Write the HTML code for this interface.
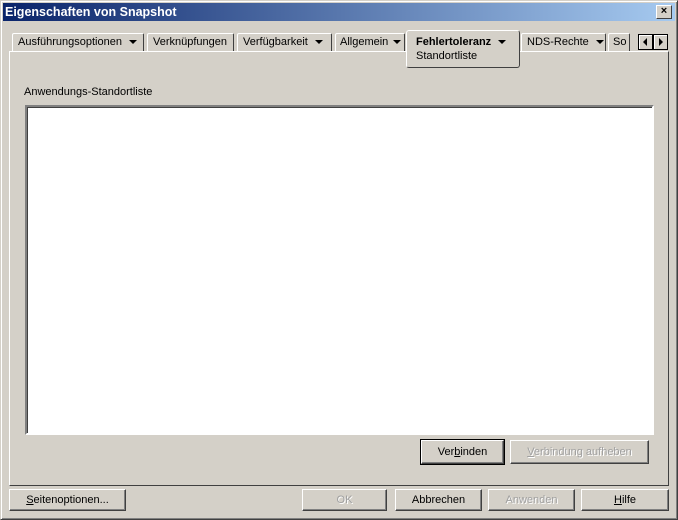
<!DOCTYPE html>
<html><head><style>
*{margin:0;padding:0;box-sizing:border-box}
body{width:678px;height:520px;background:#d4d0c8;font:11px "Liberation Sans",sans-serif;color:#000;position:relative;overflow:hidden}
.a{position:absolute}
.win{left:0;top:0;width:678px;height:520px;border:1px solid;border-color:#d4d0c8 #404040 #404040 #d4d0c8;box-shadow:inset 1px 1px #fff,inset -1px -1px #808080}
.title{left:3px;top:3px;width:672px;height:18px;background:linear-gradient(90deg,#0a246a,#a6caf0);color:#fff;font-weight:bold;font-size:12.5px;line-height:18px;padding-left:2px}
.close{left:656px;top:5px;width:16px;height:14px;background:#d4d0c8;border:1px solid;border-color:#fff #404040 #404040 #fff;font-size:11px;line-height:11px;text-align:center;color:#000;font-weight:bold}
.tab{top:33px;height:18px;border:1px solid;border-color:#fff #404040 transparent #fff;border-bottom:none;border-radius:2px 2px 0 0;line-height:17px;padding-left:5px;white-space:nowrap;overflow:hidden}
.ar{display:inline-block;width:0;height:0;border-left:4px solid transparent;border-right:4px solid transparent;border-top:4px solid #000;vertical-align:middle;margin-left:7px}
.panel{left:9px;top:51px;width:660px;height:435px;border:1px solid;border-color:#fff #404040 #404040 #fff}
.list{left:25px;top:105px;width:629px;height:330px;background:#fff;border:2px solid;border-color:#808080 #fff #fff #808080;box-shadow:inset 1px 1px #404040}
.btn{height:24px;border:1px solid;border-color:#fff #404040 #404040 #fff;box-shadow:inset -1px -1px #808080;text-align:center;line-height:22px}
.dis{color:#a0a0a0;text-shadow:1px 1px #fff}
.def{outline:1px solid #000}
</style></head><body>
<div class="a win"></div>
<div class="a title">Eigenschaften von Snapshot</div>
<div class="a close">×</div>
<div class="a panel"></div>
<div class="a tab" style="left:12px;width:132px">Ausführungsoptionen<span class="ar"></span></div>
<div class="a tab" style="left:147px;width:87px">Verknüpfungen</div>
<div class="a tab" style="left:237px;width:95px">Verfügbarkeit<span class="ar"></span></div>
<div class="a tab" style="left:335px;width:70px;padding-left:4px">Allgemein<span class="ar" style="margin-left:5px"></span></div>
<div class="a tab" style="left:521px;width:85px">NDS-Rechte<span class="ar"></span></div>
<div class="a tab" style="left:608px;width:22px;padding-left:4px">So</div>
<div class="a" style="left:406px;top:30px;width:114px;height:38px;background:#d4d0c8;border:1px solid;border-color:#fff #404040 #404040 #fff;border-radius:3px;padding:4px 0 0 9px;line-height:14px"><b>Fehlertoleranz</b><span class="ar"></span><br>Standortliste</div>
<div class="a" style="left:638px;top:34px;width:15px;height:16px;border:1px solid #000;box-shadow:inset 1px 1px #fff"><svg width="13" height="14"><path d="M8 3v8L4 7z" fill="#000"/></svg></div>
<div class="a" style="left:653px;top:34px;width:15px;height:16px;border:1px solid #000;box-shadow:inset 1px 1px #fff"><svg width="13" height="14"><path d="M5 3v8l4-4z" fill="#000"/></svg></div>
<div class="a" style="left:24px;top:86px">Anwendungs-Standortliste</div>
<div class="a list"></div>
<div class="a btn def" style="left:421px;top:440px;width:83px">Ver<u>b</u>inden</div>
<div class="a btn dis" style="left:510px;top:440px;width:139px"><u>V</u>erbindung aufheben</div>
<div class="a btn" style="left:9px;top:489px;width:117px;height:22px;line-height:20px"><u>S</u>eitenoptionen...</div>
<div class="a btn dis" style="left:302px;top:489px;width:85px;height:22px;line-height:20px">OK</div>
<div class="a btn" style="left:395px;top:489px;width:87px;height:22px;line-height:20px">Abbrechen</div>
<div class="a btn dis" style="left:488px;top:489px;width:87px;height:22px;line-height:20px">Anwenden</div>
<div class="a btn" style="left:581px;top:489px;width:88px;height:22px;line-height:20px"><u>H</u>ilfe</div>
</body></html>
